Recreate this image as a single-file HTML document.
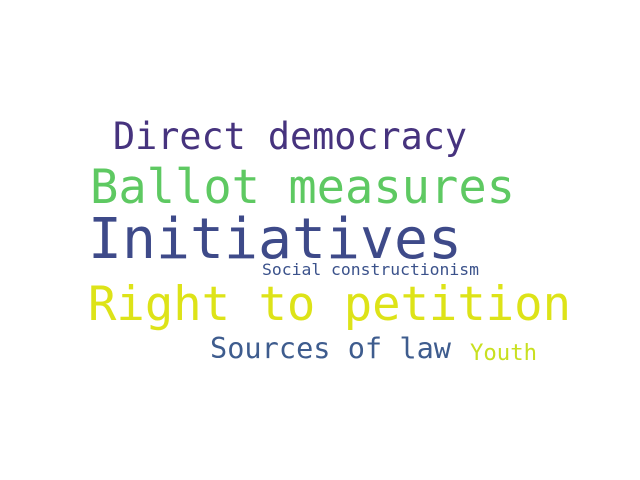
<!DOCTYPE html>
<html><head><meta charset="utf-8"><style>
html,body{margin:0;padding:0;background:#fff;width:640px;height:480px;overflow:hidden}
text{font-family:"DejaVu Sans Mono","Liberation Mono",monospace}
</style></head><body>
<svg width="640" height="480" viewBox="0 0 640 480" xmlns="http://www.w3.org/2000/svg">
<rect width="640" height="480" fill="#fff"/>
<text x="113" y="149" font-size="37" fill="#46337e" textLength="354" lengthAdjust="spacingAndGlyphs">Direct democracy</text>
<text x="90" y="203" font-size="47" fill="#5ec962" textLength="425" lengthAdjust="spacingAndGlyphs">Ballot measures</text>
<text x="88" y="258" font-size="56" fill="#3e4a89" textLength="374" lengthAdjust="spacingAndGlyphs">Initiatives</text>
<text x="262" y="275" font-size="16" fill="#3b528b" textLength="217" lengthAdjust="spacingAndGlyphs">Social constructionism</text>
<text x="88" y="320" font-size="47" fill="#dde318" textLength="483" lengthAdjust="spacingAndGlyphs">Right to petition</text>
<text x="210" y="358" font-size="28.5" fill="#3e5c8e" textLength="241" lengthAdjust="spacingAndGlyphs">Sources of law</text>
<text x="470" y="360" font-size="22" fill="#c8e020" textLength="67" lengthAdjust="spacingAndGlyphs">Youth</text>
</svg>
</body></html>
